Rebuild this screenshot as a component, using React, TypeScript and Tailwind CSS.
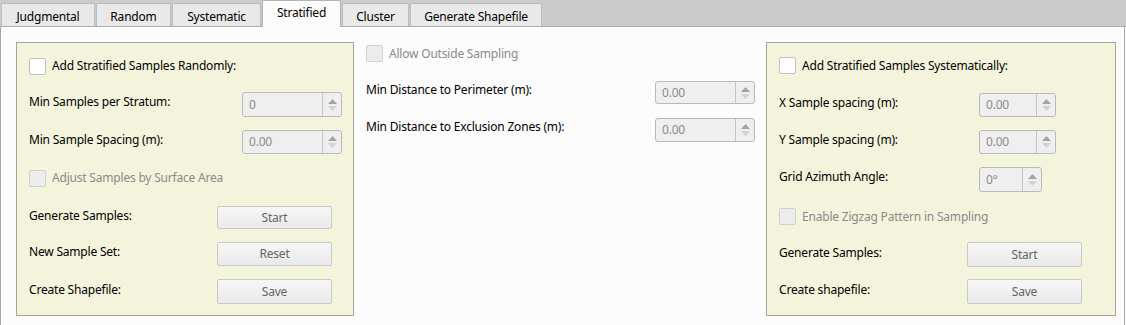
import React from 'react';

const font = { fontFamily: '"Noto Sans", "Open Sans", sans-serif' };

const tabs = [
  { label: 'Judgmental', w: 'w-[94px]' },
  { label: 'Random', w: 'w-[75px]' },
  { label: 'Systematic', w: 'w-[89px]' },
  { label: 'Stratified', w: 'w-[79px]', active: true },
  { label: 'Cluster', w: 'w-[67px]' },
  { label: 'Generate Shapefile', w: 'w-[132px]' },
];

const CheckBox = ({ disabled }: { disabled?: boolean }) => (
  <span
    className={
      'inline-block w-[17px] h-[17px] rounded-[2px] border shrink-0 ' +
      (disabled ? 'bg-[#ececec] border-[#d0d0d0]' : 'bg-white border-[#c2c2c2]')
    }
  />
);

const CheckRow = ({ label, disabled, className }: { label: string; disabled?: boolean; className: string }) => (
  <div className={'flex items-center gap-[6px] ' + className}>
    <CheckBox disabled={disabled} />
    <span className={disabled ? 'text-[#8a8a8a]' : 'text-black'}>{label}</span>
  </div>
);

const SpinBox = ({ value, width }: { value: string; width: string }) => (
  <div className={'flex h-full border border-[#b9b9b9] rounded-[3px] bg-[#efefef] ' + width}>
    <div className="flex-1 flex items-center pl-[6px] text-[#8c8c8c]">{value}</div>
    <div className="w-[19px] border-l border-[#c4c4c4] flex flex-col items-center justify-center gap-[2px]">
      <svg width="9" height="5" viewBox="0 0 9 5">
        <path d="M0 5 L4.5 0 L9 5 Z" fill="#a3a3a3" />
      </svg>
      <svg width="9" height="5" viewBox="0 0 9 5">
        <path d="M0 0 L4.5 5 L9 0 Z" fill="#d2d2d2" />
      </svg>
    </div>
  </div>
);

const SpinRow = ({
  label,
  value,
  labelW,
  spinW,
  className,
}: {
  label: string;
  value: string;
  labelW: string;
  spinW: string;
  className: string;
}) => (
  <div className={'flex items-center ' + className}>
    <span className={'shrink-0 pb-[5px] ' + labelW}>{label}</span>
    <SpinBox value={value} width={spinW} />
  </div>
);

const ButtonRow = ({ label, button, className }: { label: string; button: string; className: string }) => (
  <div className={'flex items-center ' + className}>
    <span className="w-[188px] shrink-0 pb-[4px]">{label}</span>
    <div className="w-[115px] h-full flex items-center justify-center border border-[#c9c9c9] rounded-[2px] bg-gradient-to-b from-[#f7f7f7] to-[#e9e9e9] text-[#666666]">
      {button}
    </div>
  </div>
);

export default function App() {
  return (
    <div
      className="w-[1126px] h-[325px] bg-[#fcfcfc] text-[12px] tracking-[-0.2px] text-black overflow-hidden"
      style={font}
    >
      {/* Tab strip */}
      <div className="h-[27px] bg-[#cccbcc] border-b border-[#acacac] flex items-end pl-[1px] gap-[1px]">
        {tabs.map((t) =>
          t.active ? (
            <div
              key={t.label}
              className={
                'h-[27px] -mb-[1px] bg-[#fcfcfc] border border-b-0 border-[#b4b4b4] rounded-t-[2px] flex items-start justify-center pt-[3px] ' +
                t.w
              }
            >
              {t.label}
            </div>
          ) : (
            <div
              key={t.label}
              className={
                'h-[23px] bg-[#e9e9e9] border border-b-0 border-[#bcbcbc] rounded-t-[2px] flex items-center justify-center pt-[3px] ' +
                t.w
              }
            >
              {t.label}
            </div>
          )
        )}
      </div>

      {/* Page */}
      <div className="h-[298px] border-l border-r border-[#a9a9a9] w-[1125px] flex pl-[15px] pt-[15px]">
        {/* Left group */}
        <div className="w-[338px] h-[274px] border border-[#a5a596] bg-[#f4f4dd] pl-[12px] flex flex-col">
          <CheckRow label="Add Stratified Samples Randomly:" className="mt-[15px] h-[16px]" />
          <SpinRow
            label="Min Samples per Stratum:"
            value="0"
            labelW="w-[213px]"
            spinW="w-[100px]"
            className="mt-[18px] h-[25px]"
          />
          <SpinRow
            label="Min Sample Spacing (m):"
            value="0.00"
            labelW="w-[213px]"
            spinW="w-[100px]"
            className="mt-[13px] h-[24px]"
          />
          <CheckRow label="Adjust Samples by Surface Area" disabled className="mt-[16px] h-[16px]" />
          <ButtonRow label="Generate Samples:" button="Start" className="mt-[20px] h-[23px]" />
          <ButtonRow label="New Sample Set:" button="Reset" className="mt-[13px] h-[24px]" />
          <ButtonRow label="Create Shapefile:" button="Save" className="mt-[13px] h-[25px]" />
        </div>

        {/* Middle column */}
        <div className="w-[389px] ml-[12px] flex flex-col">
          <CheckRow label="Allow Outside Sampling" disabled className="mt-[3px] h-[17px]" />
          <div className="flex items-center justify-between mt-[19px] h-[23px]">
            <span className="pb-[6px]">Min Distance to Perimeter (m):</span>
            <SpinBox value="0.00" width="w-[100px]" />
          </div>
          <div className="flex items-center justify-between mt-[14px] h-[24px]">
            <span className="pb-[6px]">Min Distance to Exclusion Zones (m):</span>
            <SpinBox value="0.00" width="w-[100px]" />
          </div>
        </div>

        {/* Right group */}
        <div className="w-[350px] h-[274px] ml-[11px] border border-[#a5a596] bg-[#f4f4dd] pl-[12px] flex flex-col">
          <CheckRow label="Add Stratified Samples Systematically:" className="mt-[14px] h-[17px]" />
          <SpinRow
            label="X Sample spacing (m):"
            value="0.00"
            labelW="w-[200px]"
            spinW="w-[77px]"
            className="mt-[19px] h-[24px]"
          />
          <SpinRow
            label="Y Sample spacing (m):"
            value="0.00"
            labelW="w-[200px]"
            spinW="w-[77px]"
            className="mt-[13px] h-[24px]"
          />
          <SpinRow
            label="Grid Azimuth Angle:"
            value="0°"
            labelW="w-[200px]"
            spinW="w-[63px]"
            className="mt-[13px] h-[25px]"
          />
          <CheckRow label="Enable Zigzag Pattern in Sampling" disabled className="mt-[16px] h-[17px]" />
          <ButtonRow label="Generate Samples:" button="Start" className="mt-[17px] h-[25px]" />
          <ButtonRow label="Create shapefile:" button="Save" className="mt-[12px] h-[25px]" />
        </div>
      </div>
    </div>
  );
}
